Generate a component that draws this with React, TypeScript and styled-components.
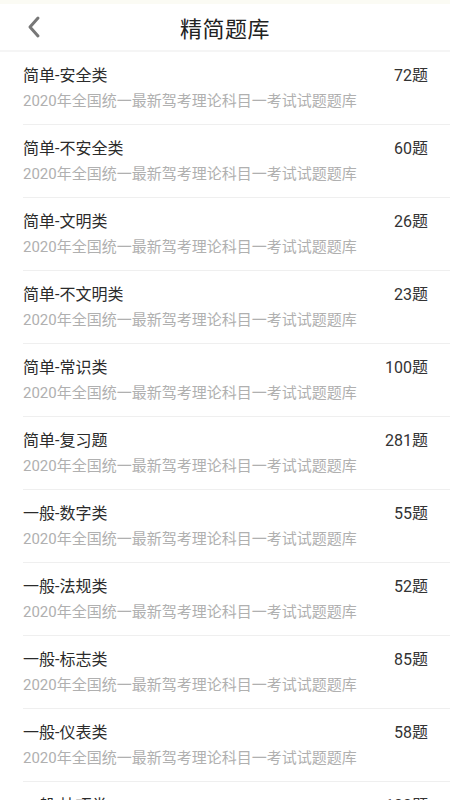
import React from 'react';
import styled, { createGlobalStyle } from 'styled-components';

const GlobalStyle = createGlobalStyle`
  body {
    margin: 0;
    background: #ffffff;
    font-family: Roboto, 'Noto Sans CJK SC', sans-serif;
  }
`;

const Page = styled.div`
  width: 450px;
  height: 800px;
  overflow: hidden;
  background: #ffffff;
`;

const StatusStrip = styled.div`
  height: 4px;
  background: #fbfbf4;
`;

const Header = styled.div`
  height: 46px;
  display: flex;
  align-items: center;
  justify-content: center;
  position: relative;
  border-bottom: 2px solid #f5f5f5;
`;

const BackButton = styled.button`
  position: absolute;
  left: 20px;
  top: 9px;
  width: 28px;
  height: 28px;
  border: none;
  background: none;
  padding: 0;
  display: flex;
  align-items: center;
  justify-content: center;
`;

const Title = styled.h1`
  margin: 0;
  font-size: 22px;
  font-weight: 400;
  color: #222222;
  letter-spacing: 0.5px;
`;

const List = styled.div`
  display: flex;
  flex-direction: column;
`;

const Row = styled.div`
  margin-left: 23px;
  padding: 10px 22px 0 0;
  height: 62px;
  border-bottom: 1px solid #efefef;
  display: flex;
  flex-direction: column;
  gap: 5px;
`;

const TopLine = styled.div`
  display: flex;
  justify-content: space-between;
  align-items: center;
  height: 23px;
`;

const Name = styled.span`
  font-size: 16px;
  color: #2b2b2b;
`;

const Count = styled.span`
  font-size: 16px;
  color: #333333;
`;

const Sub = styled.div`
  font-size: 15px;
  color: #b0b0b0;
  line-height: 22px;
`;

const items = [
  { name: '简单-安全类', count: 72 },
  { name: '简单-不安全类', count: 60 },
  { name: '简单-文明类', count: 26 },
  { name: '简单-不文明类', count: 23 },
  { name: '简单-常识类', count: 100 },
  { name: '简单-复习题', count: 281 },
  { name: '一般-数字类', count: 55 },
  { name: '一般-法规类', count: 52 },
  { name: '一般-标志类', count: 85 },
  { name: '一般-仪表类', count: 58 },
  { name: '一般-技巧类', count: 100 },
];

const App: React.FC = () => {
  return (
    <>
      <GlobalStyle />
      <Page>
        <StatusStrip />
        <Header>
          <BackButton aria-label="back">
            <svg width="16" height="24" viewBox="0 0 16 24">
              <path d="M12 3 L4 12 L12 21" fill="none" stroke="#777777" strokeWidth="3" strokeLinecap="round" strokeLinejoin="round" />
            </svg>
          </BackButton>
          <Title>精简题库</Title>
        </Header>
        <List>
          {items.map((item) => (
            <Row key={item.name}>
              <TopLine>
                <Name>{item.name}</Name>
                <Count>{item.count}题</Count>
              </TopLine>
              <Sub>2020年全国统一最新驾考理论科目一考试试题题库</Sub>
            </Row>
          ))}
        </List>
      </Page>
    </>
  );
};

export default App;
